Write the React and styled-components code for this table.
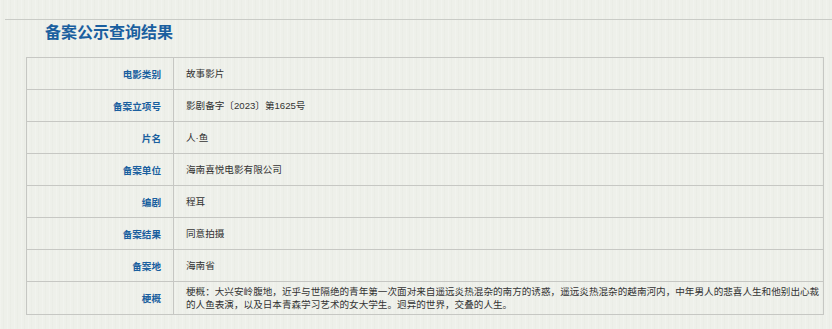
import React from "react";
import styled, { createGlobalStyle } from "styled-components";

const GlobalStyle = createGlobalStyle`
    html, body {
        margin: 0;
        padding: 0;
    }
    body {
        width: 832px;
        height: 329px;
        overflow: hidden;
        background-color: #eef0ea;
        background-image: repeating-linear-gradient(
            90deg,
            rgba(255, 255, 255, 0.18) 0px,
            rgba(255, 255, 255, 0.18) 1px,
            rgba(0, 0, 0, 0) 1px,
            rgba(0, 0, 0, 0) 3px,
            rgba(210, 214, 204, 0.12) 3px,
            rgba(210, 214, 204, 0.12) 4px,
            rgba(0, 0, 0, 0) 4px,
            rgba(0, 0, 0, 0) 7px
        );
        font-family: "Noto Sans CJK SC", "Liberation Sans", sans-serif;
    }
`;

const Page = styled.div`
    padding-top: 19px;
`;

const Section = styled.section`
    margin-left: 5px;
    border-top: 1px solid #c9cbc6;
`;

const Title = styled.h2`
    margin: 0;
    padding-left: 40px;
    font-size: 16px;
    line-height: 22px;
    font-weight: bold;
    color: #1a5f9f;
`;

const Table = styled.table`
    margin: 15px 0 0 21px;
    width: 798px;
    border-collapse: collapse;
    table-layout: fixed;
`;

const Row = styled.tr`
    height: 32px;
`;

const Label = styled.th`
    width: 134px;
    padding: 0 12px 0 0;
    border: 1px solid #c6c7c3;
    text-align: right;
    font-size: 9.6px;
    font-weight: bold;
    color: #1a5f9f;
`;

const Value = styled.td`
    padding: ${(p) => (p.$multi ? "3px 2px 3px 12px" : "0 2px 0 12px")};
    border: 1px solid #c6c7c3;
    text-align: left;
    font-family: "Liberation Sans", "Noto Sans CJK SC", sans-serif;
    font-size: 9.6px;
    line-height: 13px;
    color: #333333;
`;

const rows = [
    ["电影类别", "故事影片"],
    ["备案立项号", "影剧备字〔2023〕第1625号"],
    ["片名", "人·鱼"],
    ["备案单位", "海南喜悦电影有限公司"],
    ["编剧", "程耳"],
    ["备案结果", "同意拍摄"],
    ["备案地", "海南省"],
];

const synopsis =
    "梗概：大兴安岭腹地，近乎与世隔绝的青年第一次面对来自遥远炎热混杂的南方的诱惑，遥远炎热混杂的越南河内，中年男人的悲喜人生和他别出心裁的人鱼表演，以及日本青森学习艺术的女大学生。迥异的世界，交叠的人生。";

const App = () => {
    return (
        <Page>
            <GlobalStyle />
            <Section>
                <Title>备案公示查询结果</Title>
                <Table>
                    <tbody>
                        {rows.map(([k, v]) => (
                            <Row key={k}>
                                <Label>{k}</Label>
                                <Value>{v}</Value>
                            </Row>
                        ))}
                        <Row>
                            <Label>梗概</Label>
                            <Value $multi>{synopsis}</Value>
                        </Row>
                    </tbody>
                </Table>
            </Section>
        </Page>
    );
};

export default App;
